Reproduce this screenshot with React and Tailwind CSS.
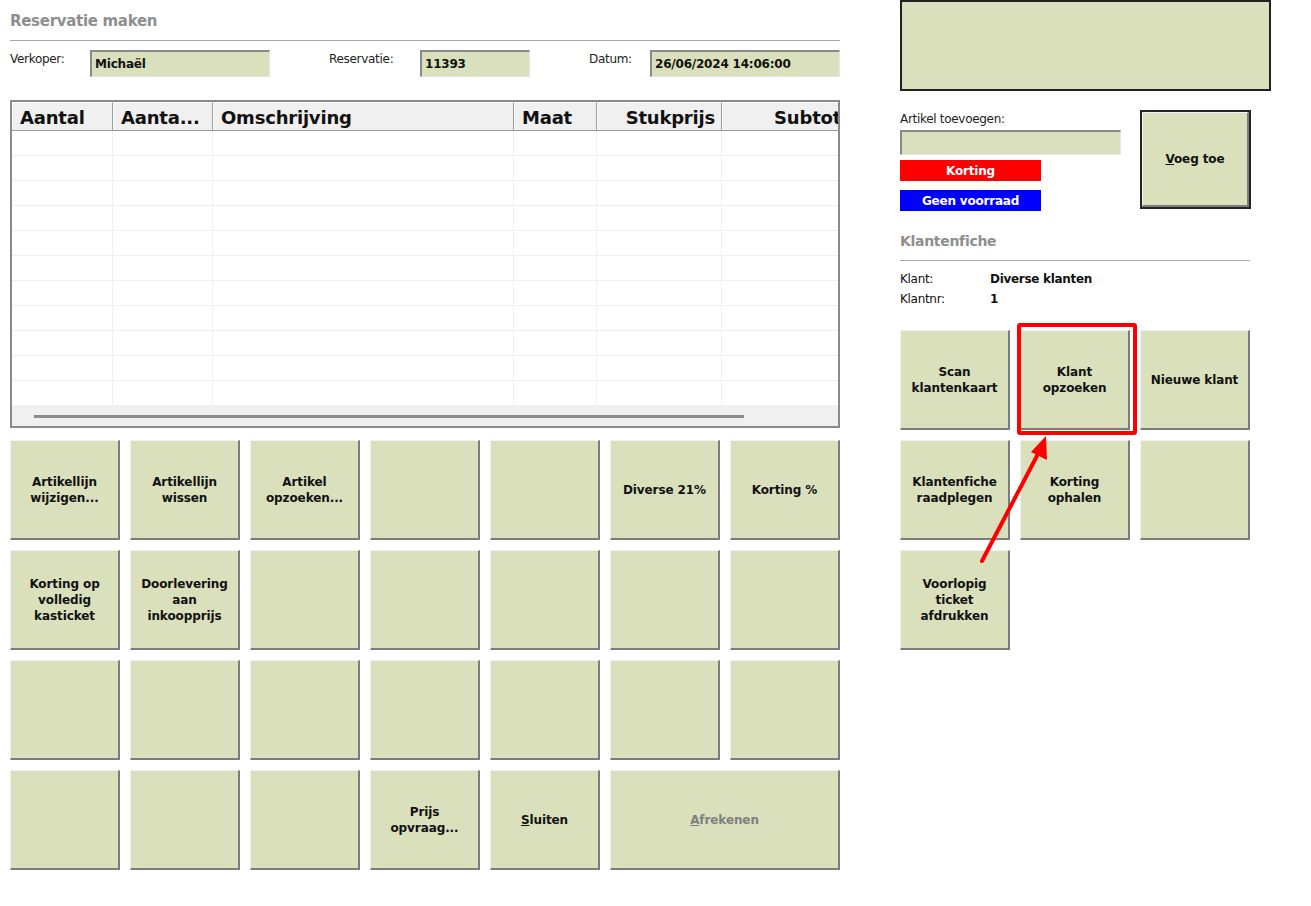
import React from "react";

const font = { fontFamily: '"DejaVu Sans", Verdana, sans-serif' };

const btnBase =
  "flex items-center justify-center text-center bg-[#dae0bb] border-t border-l border-r-2 border-b-2 border-t-[#f2f2f2] border-l-[#f2f2f2] border-r-[#7c7c7c] border-b-[#7c7c7c] text-[12px] leading-[16px] font-bold tracking-[-0.1px] whitespace-pre-line";

const Btn = ({ children, className = "", color = "text-[#111]" }) => (
  <div className={`${btnBase} ${color} h-[100px] ${className}`}>{children}</div>
);

const Field = ({ value, className = "" }) => (
  <div
    className={`h-[27px] bg-[#dae0bb] border-t-2 border-l-2 border-t-[#8a8a8a] border-l-[#8a8a8a] border-b border-r border-b-[#e6e6e6] border-r-[#e6e6e6] pl-[3px] flex items-center text-[12px] font-bold text-[#111] tracking-[-0.2px] ${className}`}
  >
    {value}
  </div>
);

const cols = [
  { label: "Aantal", w: "w-[101px]", align: "text-left pl-[7px]" },
  { label: "Aanta...", w: "w-[100px]", align: "text-left pl-[7px]" },
  { label: "Omschrijving", w: "w-[301px]", align: "text-left pl-[7px]" },
  { label: "Maat", w: "w-[83px]", align: "text-left pl-[7px]" },
  { label: "Stukprijs", w: "w-[125px]", align: "text-right pr-[6px]" },
  { label: "Subtotaal", w: "w-[160px]", align: "text-right pr-[10px]" },
];

const leftButtons = [
  "Artikellijn\nwijzigen...",
  "Artikellijn\nwissen",
  "Artikel\nopzoeken...",
  "",
  "",
  "Diverse 21%",
  "Korting %",
  "Korting op\nvolledig\nkasticket",
  "Doorlevering\naan\ninkoopprijs",
  "",
  "",
  "",
  "",
  "",
  "",
  "",
  "",
  "",
  "",
  "",
  "",
  "",
  "",
  "",
  "Prijs\nopvraag...",
];

const App = () => {
  return (
    <div className="relative w-[1311px] h-[906px] bg-white overflow-hidden" style={font}>
      <div className="flex">
        {/* left side */}
        <div className="ml-[10px] w-[830px] flex flex-col">
          <div className="h-[41px] border-b border-[#a8a8a8] pt-[10px] text-[15px] font-bold text-[#8e8e8e] tracking-[-0.3px]">
            Reservatie maken
          </div>

          <div className="mt-[9px] flex items-start text-[12px] text-[#222] tracking-[-0.3px]">
            <div className="w-[80px]">Verkoper:</div>
            <Field value="Michaël" className="w-[180px]" />
            <div className="ml-[59px] w-[91px]">Reservatie:</div>
            <Field value="11393" className="w-[110px]" />
            <div className="ml-[59px] w-[61px]">Datum:</div>
            <Field value="26/06/2024 14:06:00" className="w-[190px]" />
          </div>

          {/* table */}
          <div className="mt-[23px] h-[328px] border-2 border-[#8a8a8a] bg-white flex flex-col overflow-hidden">
            <div className="flex h-[30px] bg-[#f0f0f0] border-b border-[#9a9a9a] overflow-hidden">
              {cols.map((c) => (
                <div
                  key={c.label}
                  className={`${c.w} shrink-0 border-t border-l border-t-[#ffffff] border-l-[#ffffff] border-r border-r-[#9a9a9a] text-[18px] font-bold leading-[30px] text-[#111] tracking-[-0.2px] whitespace-nowrap ${c.align}`}
                >
                  {c.label}
                </div>
              ))}
            </div>
            <div className="flex-1 flex flex-col">
              {Array.from({ length: 11 }).map((_, i) => (
                <div key={i} className="flex h-[25px] border-b border-[#f0f0f0]">
                  {cols.map((c) => (
                    <div key={c.label} className={`${c.w} shrink-0 border-r border-[#f0f0f0]`} />
                  ))}
                </div>
              ))}
            </div>
            <div className="h-[20px] bg-[#f0f0f0] flex items-center pl-[22px]">
              <div className="w-[710px] h-[3px] bg-[#8c8c8c]" />
            </div>
          </div>

          {/* button grid */}
          <div className="mt-[12px] grid grid-cols-[repeat(7,110px)] gap-[10px]">
            {leftButtons.map((t, i) => (
              <Btn key={i}>{t}</Btn>
            ))}
            <Btn>
              <span>
                <span className="underline">S</span>luiten
              </span>
            </Btn>
            <Btn className="col-span-2" color="text-[#808080]">
              <span>
                <span className="underline">A</span>frekenen
              </span>
            </Btn>
          </div>
        </div>

        {/* right side */}
        <div className="ml-[60px] w-[371px] flex flex-col">
          <div className="h-[91px] bg-[#dae0bb] border-2 border-[#222]" />

          <div className="mt-[19px] flex">
            <div className="w-[221px] flex flex-col">
              <div className="text-[12px] text-[#222] leading-[16px] pt-[1px] tracking-[-0.3px]">
                Artikel toevoegen:
              </div>
              <div className="mt-[3px] h-[25px] bg-[#dae0bb] border-t-2 border-l-2 border-t-[#8a8a8a] border-l-[#8a8a8a] border-b border-r border-b-[#e6e6e6] border-r-[#e6e6e6]" />
              <div className="mt-[5px] w-[141px] h-[21px] bg-[#ff0000] text-white text-[12px] font-bold flex items-center justify-center tracking-[-0.2px]">
                Korting
              </div>
              <div className="mt-[9px] w-[141px] h-[21px] bg-[#0000ff] text-white text-[12px] font-bold flex items-center justify-center tracking-[-0.2px]">
                Geen voorraad
              </div>
            </div>
            <div className="ml-[19px] w-[111px] h-[99px] border-2 border-[#2a2424]">
              <div className={`${btnBase} text-[#111] h-full`}>
                <span>
                  <span className="underline">V</span>oeg toe
                </span>
              </div>
            </div>
          </div>

          <div className="mt-[20px] w-[350px] h-[30px] border-b border-[#a8a8a8] text-[14px] font-bold text-[#8e8e8e] tracking-[-0.3px]">
            Klantenfiche
          </div>
          <div className="mt-[8px] text-[12px] text-[#111] leading-[20px] tracking-[-0.3px]">
            <div className="flex">
              <div className="w-[90px]">Klant:</div>
              <div className="font-bold">Diverse klanten</div>
            </div>
            <div className="flex">
              <div className="w-[90px]">Klantnr:</div>
              <div className="font-bold">1</div>
            </div>
          </div>

          <div className="mt-[21px] grid grid-cols-[repeat(3,110px)] gap-[10px]">
            <Btn>{"Scan\nklantenkaart"}</Btn>
            <Btn>{"Klant\nopzoeken"}</Btn>
            <Btn>Nieuwe klant</Btn>
            <Btn>{"Klantenfiche\nraadplegen"}</Btn>
            <Btn>{"Korting\nophalen"}</Btn>
            <Btn />
            <Btn>{"Voorlopig\nticket\nafdrukken"}</Btn>
          </div>
        </div>
      </div>

      {/* annotation overlay */}
      <div className="absolute left-[1017px] top-[323px] w-[120px] h-[112px] border-[4px] border-[#ff0000] rounded-[3px]" />
      <svg className="absolute left-0 top-0" width="1311" height="906">
        <line x1="982" y1="561" x2="1039" y2="452" stroke="#ff0000" strokeWidth="4" strokeLinecap="round" />
        <polygon points="1046,436 1031,452 1047,460" fill="#ff0000" />
      </svg>
    </div>
  );
};

export default App;
